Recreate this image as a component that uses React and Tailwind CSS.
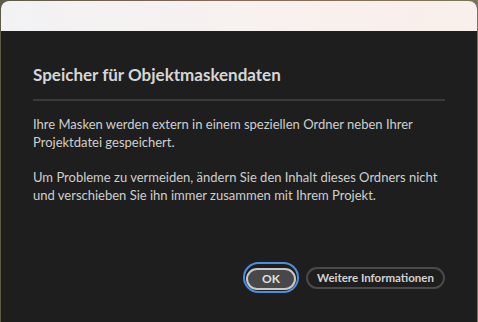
import React from 'react';

function App() {
  return (
    <div className="w-[478px] h-[322px] bg-gradient-to-r from-[#5d5a48] via-[#8a6a5c] to-[#7b7450] p-px pb-0 overflow-hidden" style={{ fontFamily: 'Lato, "Liberation Sans", sans-serif' }}>
      <div className="flex flex-col h-full rounded-t-[8px] overflow-hidden bg-[#1e1e1e]">
        <div className="h-[30px] shrink-0 bg-gradient-to-r from-[#f2f2f4] via-[#f7f1ef] to-[#f9efeb]" />
        <div className="flex flex-col flex-1 px-[32px] pt-[34px]">
          <h1 className="text-[17px] font-bold text-[#d6d6d6] leading-[20px]">Speicher für Objektmaskendaten</h1>
          <div className="h-[2px] bg-[#3a3a3a] mt-[14px] mb-[14px]" />
          <p className="text-[13px] text-[#cfcfcf] leading-[18px]">
            Ihre Masken werden extern in einem speziellen Ordner neben Ihrer Projektdatei gespeichert.
          </p>
          <p className="text-[13px] text-[#cfcfcf] leading-[18px] mt-[17px]">
            Um Probleme zu vermeiden, ändern Sie den Inhalt dieses Ordners nicht und verschieben Sie ihn immer zusammen mit Ihrem Projekt.
          </p>
          <div className="flex justify-end items-center gap-[7px] mt-auto mb-[29px]">
            <div className="rounded-full border-2 border-[#4b8fe0] p-px">
              <button className="h-[22px] w-[50px] rounded-full border-2 border-[#c8c8c8] bg-[#484848] text-[12px] font-bold text-[#e0e0e0] leading-none">OK</button>
            </div>
            <button className="h-[22px] px-[9px] rounded-full border-2 border-[#4a4a4a] text-[11.5px] font-bold text-[#d2d2d2] leading-none">Weitere Informationen</button>
          </div>
        </div>
      </div>
    </div>
  );
}

export default App;
